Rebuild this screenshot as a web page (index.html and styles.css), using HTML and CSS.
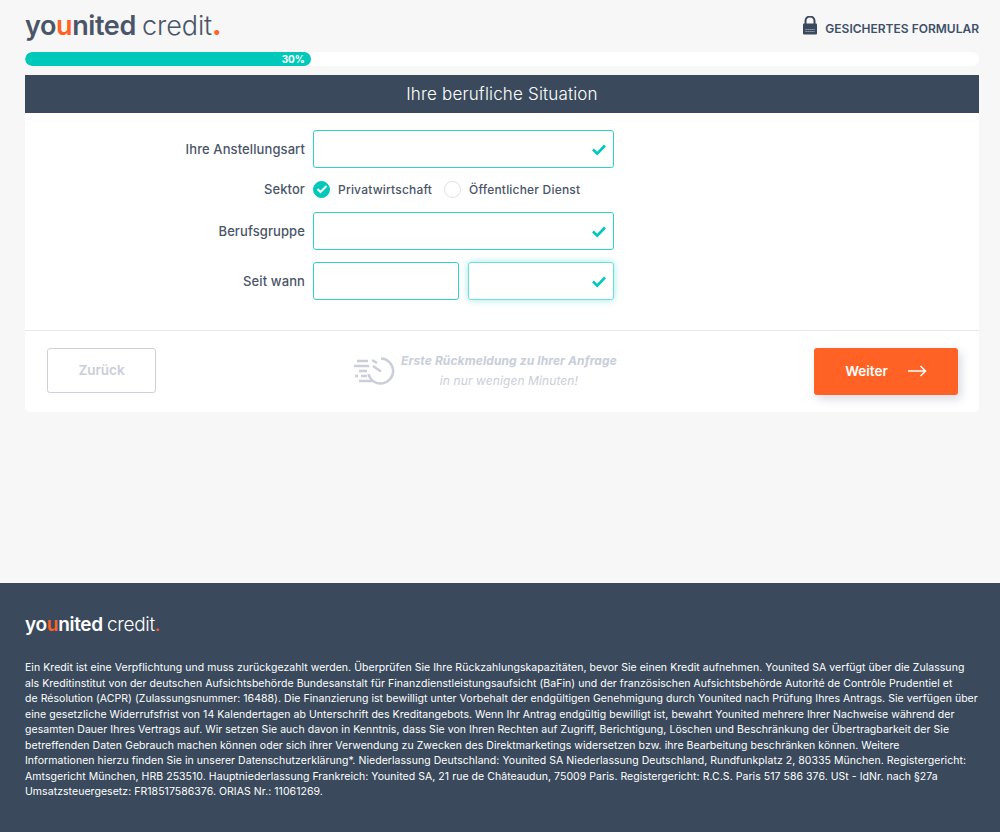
FILE: index.html
```html
<!DOCTYPE html>
<html lang="de">
<head>
<meta charset="utf-8">
<title>Younited Credit</title>
<link rel="stylesheet" href="styles.css">
</head>
<body>
<div class="page">
  <main class="main">
    <header class="top">
      <div class="logo"><b>yo<span class="org">u</span>nited</b> <span class="thin">credit</span><span class="org dot">.</span></div>
      <div class="secure">
        <svg class="lock" width="16" height="19" viewBox="0 0 16 19"><path d="M3.500 8V5a4.500 4.500 0 0 1 9 0v3" fill="none" stroke="#3a4a5c" stroke-width="2"/><rect x="1" y="7.500" width="14" height="11" rx="1" fill="#3a4a5c"/><path d="M3.500 13.500h9M3.500 15.500h9" stroke="#aab4c0" stroke-width="1.200" stroke-dasharray="1.200 .8"/></svg>
        <span>GESICHERTES FORMULAR</span>
      </div>
    </header>
    <div class="track"><div class="fill">30%</div></div>
    <h1 class="title">Ihre berufliche Situation</h1>
    <section class="card">
      <form class="form">
        <div class="row">
          <label class="lbl">Ihre Anstellungsart</label>
          <div class="field wide"><svg class="tick" width="16" height="13" viewBox="0 0 16 13"><path d="M2 6.500l4.200 4.200L14 2.500" fill="none" stroke="#00c9bc" stroke-width="2.600"/></svg></div>
        </div>
        <div class="row radios">
          <label class="lbl">Sektor</label>
          <span class="radio on"><svg width="12" height="10" viewBox="0 0 12 10"><path d="M1.500 5l3 3 6-6" fill="none" stroke="#fff" stroke-width="2"/></svg></span>
          <span class="rtext first">Privatwirtschaft</span>
          <span class="radio"></span>
          <span class="rtext">Öffentlicher Dienst</span>
        </div>
        <div class="row">
          <label class="lbl">Berufsgruppe</label>
          <div class="field wide"><svg class="tick" width="16" height="13" viewBox="0 0 16 13"><path d="M2 6.500l4.200 4.200L14 2.500" fill="none" stroke="#00c9bc" stroke-width="2.600"/></svg></div>
        </div>
        <div class="row">
          <label class="lbl">Seit wann</label>
          <div class="pair">
            <div class="field half"></div>
            <div class="field half glow"><svg class="tick" width="16" height="13" viewBox="0 0 16 13"><path d="M2 6.500l4.200 4.200L14 2.500" fill="none" stroke="#00c9bc" stroke-width="2.600"/></svg></div>
          </div>
        </div>
      </form>
      <div class="actions">
        <button type="button" class="btn back">Zurück</button>
        <div class="note">
          <svg class="clock" width="42" height="30" viewBox="0 0 42 30"><g fill="none" stroke="#c9ced9" stroke-width="2.400"><path d="M28 2.500A12.500 12.500 0 1 1 15.500 18"/><path d="M19 4l5 3"/><path d="M20 10l8 5.500"/><path d="M4 5h11M1 10h15M6 15h8M2 20h3M8 20h6M6 25h13"/></g></svg>
          <p class="ntext"><b>Erste Rückmeldung zu Ihrer Anfrage</b><br>in nur wenigen Minuten!</p>
        </div>
        <button type="button" class="btn next">Weiter
          <svg width="19" height="12" viewBox="0 0 19 12"><path d="M0 6h17.500M12.500 1l5 5-5 5" fill="none" stroke="#fff" stroke-width="1.500"/></svg>
        </button>
      </div>
    </section>
  </main>
  <footer class="foot">
    <div class="flogo"><b>yo<span class="org">u</span>nited</b> <span class="thin">credit</span><span class="org">.</span></div>
    <p class="legal">Ein Kredit ist eine Verpflichtung und muss zurückgezahlt werden. Überprüfen Sie Ihre Rückzahlungskapazitäten, bevor Sie einen Kredit aufnehmen. Younited SA verfügt über die Zulassung<br>als Kreditinstitut von der deutschen Aufsichtsbehörde Bundesanstalt für Finanzdienstleistungsaufsicht (BaFin) und der französischen Aufsichtsbehörde Autorité de Contrôle Prudentiel et<br>de Résolution (ACPR) (Zulassungsnummer: 16488). Die Finanzierung ist bewilligt unter Vorbehalt der endgültigen Genehmigung durch Younited nach Prüfung Ihres Antrags. Sie verfügen über<br>eine gesetzliche Widerrufsfrist von 14 Kalendertagen ab Unterschrift des Kreditangebots. Wenn Ihr Antrag endgültig bewilligt ist, bewahrt Younited mehrere Ihrer Nachweise während der<br>gesamten Dauer Ihres Vertrags auf. Wir setzen Sie auch davon in Kenntnis, dass Sie von Ihren Rechten auf Zugriff, Berichtigung, Löschen und Beschränkung der Übertragbarkeit der Sie<br>betreffenden Daten Gebrauch machen können oder sich ihrer Verwendung zu Zwecken des Direktmarketings widersetzen bzw. ihre Bearbeitung beschränken können. Weitere<br>Informationen hierzu finden Sie in unserer Datenschutzerklärung*. Niederlassung Deutschland: Younited SA Niederlassung Deutschland, Rundfunkplatz 2, 80335 München. Registergericht:<br>Amtsgericht München, HRB 253510. Hauptniederlassung Frankreich: Younited SA, 21 rue de Châteaudun, 75009 Paris. Registergericht: R.C.S. Paris 517 586 376. USt - IdNr. nach §27a<br>Umsatzsteuergesetz: FR18517586376. ORIAS Nr.: 11061269.</p>
  </footer>
</div>
</body>
</html>
```
FILE: styles.css
```css
* { box-sizing: border-box; }
html, body { margin: 0; padding: 0; }
body { font-family: Inter, "Open Sans", sans-serif; background: #f7f7f7; color: #3a4a5c; }
.page { height: 832px; display: flex; flex-direction: column; }
.main { flex: 1; padding: 0 21px 0 25px; }
.top { height: 52px; display: flex; justify-content: space-between; align-items: center; }
.logo { font-family: Inter, sans-serif; font-size: 27px; color: #4a5568; line-height: 1; padding-bottom: 2px; word-spacing: -1px; letter-spacing: -.4px; }
.logo b { font-weight: 600; }
.logo .thin { letter-spacing: -.1px; }
.thin { font-weight: 300; }
.org { color: #ff6224; }
.dot { font-weight: 800; }
.secure { display: flex; align-items: center; gap: 7px; font-size: 12px; font-weight: 600; color: #3f5068; padding-top: 5px; }
.lock { margin-top: -6px; }
.track { height: 14px; background: #fff; border-radius: 7px; overflow: hidden; }
.fill { width: 286px; height: 14px; background: #00c9bc; border-radius: 7px; color: #fff; font-size: 10px; font-weight: 700; line-height: 14px; text-align: right; padding-right: 6px; }
.title { margin: 9px 0 0; height: 38px; background: #3a4a5c; color: #fff; font-size: 17px; font-weight: 300; line-height: 39px; text-align: center; letter-spacing: .17px; }
.card { background: #fff; border-radius: 0 0 5px 5px; height: 299px; }
.form { height: 218px; padding-top: 17px; border-bottom: 1px solid #e8e8ec; display: flex; flex-direction: column; }
.row { display: flex; align-items: center; margin-bottom: 12px; }
.lbl { width: 288px; padding-right: 8px; text-align: right; font-size: 13px; color: #4a5568; font-weight: 500; letter-spacing: .1px; }
.field { position: relative; height: 38px; background: #fff; border: 1px solid #2fd0c5; border-radius: 3px; }
.wide { width: 301px; }
.half { width: 146px; }
.pair { display: flex; gap: 9px; }
.glow { box-shadow: 0 0 7px rgba(0, 201, 188, .4); border-color: #6fe0d8; }
.tick { position: absolute; right: 6px; top: 12px; }
.radios { height: 20px; margin-bottom: 13px; margin-top: -1px; }
.radio { width: 17px; height: 17px; border-radius: 50%; border: 1px solid #dfe1ea; display: flex; align-items: center; justify-content: center; background: #fff; }
.radio.on { background: #00c9bc; border-color: #00c9bc; }
.rtext { font-size: 12px; color: #4a5568; margin-left: 8px; font-weight: 500; letter-spacing: .2px; }
.first { margin-right: 12px; }
.actions { display: flex; align-items: flex-start; justify-content: space-between; padding: 17px 21px 0 22px; height: 80px; }
.btn { font-family: Inter, sans-serif; font-size: 13.500px; font-weight: 600; border-radius: 3px; height: 45px; cursor: pointer; padding-bottom: 2px; }
.back { width: 109px; background: #fff; border: 1px solid #cdd1dc; color: #c9ced9; }
.next { width: 144px; height: 47px; border: 0; background: #ff6224; color: #fff; box-shadow: 3px 4px 10px rgba(60, 75, 110, .2); display: flex; align-items: center; justify-content: center; gap: 20px; }
.note { display: flex; align-items: center; gap: 6px; margin-left: 18px; margin-right: 18px; padding-top: 3px; }
.ntext { margin: 0; font-size: 12px; line-height: 20px; font-style: italic; text-align: center; color: #c9ced9; letter-spacing: .1px; }
.foot { height: 249px; background: #3a4a5c; color: #fff; padding: 31px 21px 0 25px; }
.flogo { font-family: Inter, sans-serif; font-size: 19px; line-height: 22px; letter-spacing: -.3px; word-spacing: -1px; }
.flogo b { font-weight: 600; }
.legal { margin: 24px 0 0; font-size: 10.500px; line-height: 15.500px; white-space: nowrap; letter-spacing: .05px; }
```
